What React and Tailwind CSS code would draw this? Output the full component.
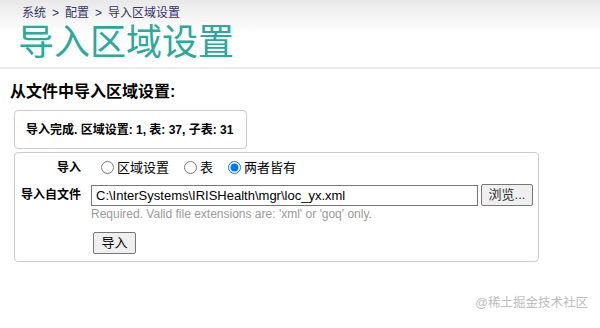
import React, { useState } from "react";

const App = () => {
    const [mode, setMode] = useState("both");
    const font = "font-['Arial','Liberation_Sans','Noto_Sans_CJK_SC',sans-serif]";

    return (
        <div className={`w-[600px] h-[328px] bg-white relative overflow-hidden ${font}`}>
            {/* header */}
            <div className="bg-gradient-to-b from-[#e8e8e8] via-white to-white pt-[6px] pl-[22px] h-[69px] border-b-2 border-[#ececec]">
                <div className="flex text-[12px] leading-[15px] text-[#333366]">
                    <span>系统</span>
                    <span className="mx-[6px]">&gt;</span>
                    <span>配置</span>
                    <span className="mx-[6px]">&gt;</span>
                    <span>导入区域设置</span>
                </div>
                <div className="text-[36px] leading-[42px] text-[#2ba99b] -ml-[4px] mt-[1px]">
                    导入区域设置
                </div>
            </div>

            <div className="pl-[10px] pt-[13px]">
                <h2 className="text-[16px] leading-[20px] font-bold text-black">从文件中导入区域设置:</h2>

                <div className="ml-[4px] mt-[8px] w-[233px] h-[39px] border border-[#cccccc] rounded-[4px] flex items-center pl-[11px]">
                    <span className="text-[12px] font-bold text-black">导入完成. 区域设置: 1, 表: 37, 子表: 31</span>
                </div>

                <div className="ml-[4px] mt-[3px] w-[525px] h-[110px] border border-[#cccccc] rounded-[4px] pt-[6px]">
                    <div className="flex items-center h-[17px]">
                        <div className="w-[66px] text-right text-[12px] font-bold">导入</div>
                        <div className="ml-[20px] flex items-center text-[13px] text-black">
                            <label className="flex items-center">
                                <input type="radio" name="m" checked={mode === "locale"} onChange={() => setMode("locale")} className="w-[13px] h-[13px] m-0 mr-[3px] accent-[#0075ff]" />
                                区域设置
                            </label>
                            <label className="flex items-center ml-[15px]">
                                <input type="radio" name="m" checked={mode === "table"} onChange={() => setMode("table")} className="w-[13px] h-[13px] m-0 mr-[3px] accent-[#0075ff]" />
                                表
                            </label>
                            <label className="flex items-center ml-[15px]">
                                <input type="radio" name="m" checked={mode === "both"} onChange={() => setMode("both")} className="w-[13px] h-[13px] m-0 mr-[3px] accent-[#0075ff]" />
                                两者皆有
                            </label>
                        </div>
                    </div>

                    <div className="flex mt-[8px]">
                        <div className="w-[66px] text-right text-[12px] font-bold pt-[2px]">导入自文件</div>
                        <div className="ml-[10px] flex flex-col">
                            <div className="flex items-center">
                                <input
                                    type="text"
                                    defaultValue="C:\InterSystems\IRISHealth\mgr\loc_yx.xml"
                                    className="w-[387px] h-[21px] border border-[#767676] px-[4px] text-[13px] text-black outline-none"
                                />
                                <button className="ml-[3px] w-[52px] h-[22px] border border-[#767676] rounded-[2px] bg-[#efefef] text-[13px] text-[#333]">
                                    浏览...
                                </button>
                            </div>
                            <div className="text-[12px] leading-[15px] text-[#9a9a9a] mt-[1px]">
                                Required. Valid file extensions are: 'xml' or 'goq' only.
                            </div>
                            <button className="mt-[10px] ml-[2px] w-[43px] h-[22px] border border-[#767676] rounded-[2px] bg-[#efefef] text-[13px] text-black self-start">
                                导入
                            </button>
                        </div>
                    </div>
                </div>
            </div>

            <div className="absolute right-[12px] bottom-[15px] text-[12.5px] text-[#bdbdbd]">@稀土掘金技术社区</div>
        </div>
    );
};

export default App;
